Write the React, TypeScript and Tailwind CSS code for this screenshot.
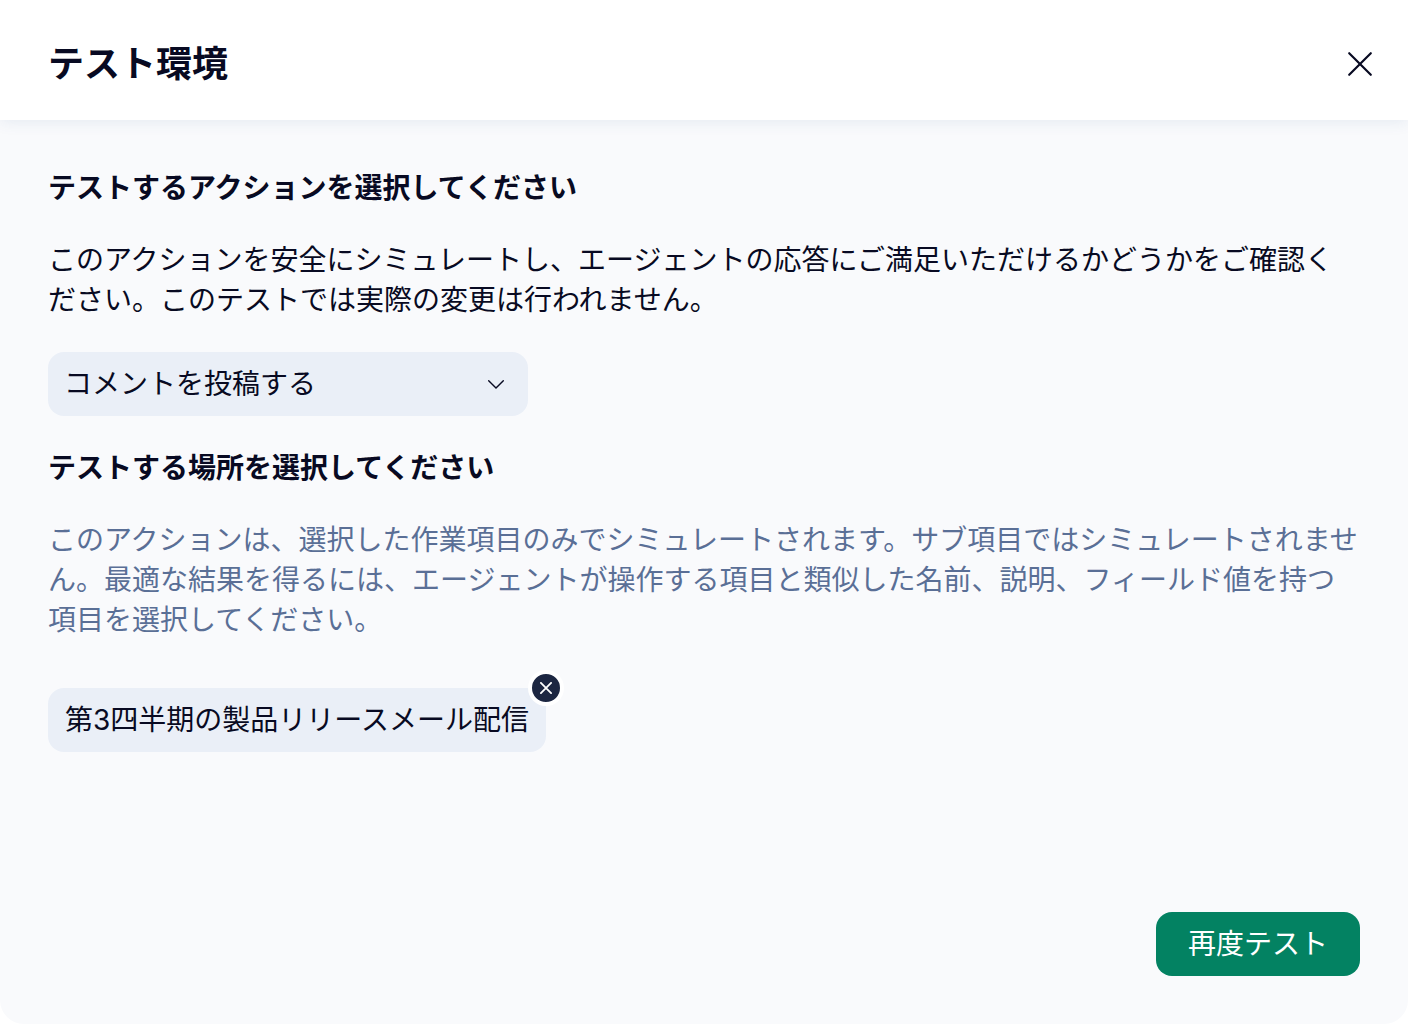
import React, { useState } from 'react';

const ACTIONS = ['コメントを投稿する', '作業項目を更新する', '担当者を割り当てる'];

export default function TestEnvironmentModal() {
  const [action, setAction] = useState(ACTIONS[0]);
  const [item, setItem] = useState('第3四半期の製品リリースメール配信');

  return (
    <div
      lang="ja"
      role="dialog"
      aria-labelledby="modal-title"
      className="flex min-h-screen flex-col overflow-hidden rounded-b-3xl bg-[#f9fafc] font-['Inter','Noto_Sans_CJK_JP',sans-serif] text-[28px] leading-10 text-[#080a22]"
    >
      {/* Header */}
      <header className="flex h-30 items-center justify-between bg-white pl-12 pr-8 pt-2 shadow-[0_0_16px_rgba(40,90,150,0.12)]">
        <h1 id="modal-title" className="text-4xl font-bold">テスト環境</h1>
        <button type="button" aria-label="閉じる" className="flex size-8 items-center justify-center">
          <svg viewBox="0 0 32 32" className="size-8" fill="none" stroke="currentColor" strokeWidth="2.2" strokeLinecap="round">
            <path d="M5.2 5.2l21.6 21.6M26.8 5.2l-21.6 21.6" />
          </svg>
        </button>
      </header>

      {/* Body */}
      <main className="flex flex-1 flex-col items-start px-12 pt-12">
        <label htmlFor="action" className="font-bold">テストするアクションを選択してください</label>
        <p className="mt-8">
          このアクションを安全にシミュレートし、エージェントの応答にご満足いただけるかどうかをご確認ください。このテストでは実際の変更は行われません。
        </p>
        <div className="relative mt-8 w-full max-w-120">
          <select
            id="action"
            value={action}
            onChange={(e) => setAction(e.target.value)}
            className="h-16 w-full appearance-none rounded-2xl bg-[#eaeff7] px-4 outline-none"
          >
            {ACTIONS.map((name) => (
              <option key={name}>{name}</option>
            ))}
          </select>
          <svg viewBox="0 0 16 16" className="pointer-events-none absolute right-6 top-6 size-4" fill="none" stroke="currentColor" strokeWidth="1.4" strokeLinecap="round">
            <path d="M0.7 4.7L8 12l7.3-7.3" />
          </svg>
        </div>

        <h2 className="mt-8 font-bold">テストする場所を選択してください</h2>
        <p className="mt-8 text-[#5a6f96]">
          このアクションは、選択した作業項目のみでシミュレートされます。サブ項目ではシミュレートされません。最適な結果を得るには、エージェントが操作する項目と類似した名前、説明、フィールド値を持つ項目を選択してください。
        </p>
        {item && (
          <div className="relative mt-12 flex h-16 items-center rounded-2xl bg-[#eaeff7] px-[17px]">
            {item}
            <button
              type="button"
              aria-label="項目を削除"
              onClick={() => setItem('')}
              className="absolute -right-[18px] -top-[18px] flex size-9 items-center justify-center rounded-full border-4 border-white bg-[#1c2641] text-white"
            >
              <svg viewBox="0 0 12 12" className="size-3" fill="none" stroke="currentColor" strokeWidth="1.8" strokeLinecap="round">
                <path d="M0.9 0.9l10.2 10.2M11.1 0.9l-10.2 10.2" />
              </svg>
            </button>
          </div>
        )}
      </main>

      {/* Footer */}
      <footer className="flex justify-end px-12 pb-12">
        <button type="button" className="h-16 rounded-2xl bg-[#038262] px-8 text-white">再度テスト</button>
      </footer>
    </div>
  );
}
